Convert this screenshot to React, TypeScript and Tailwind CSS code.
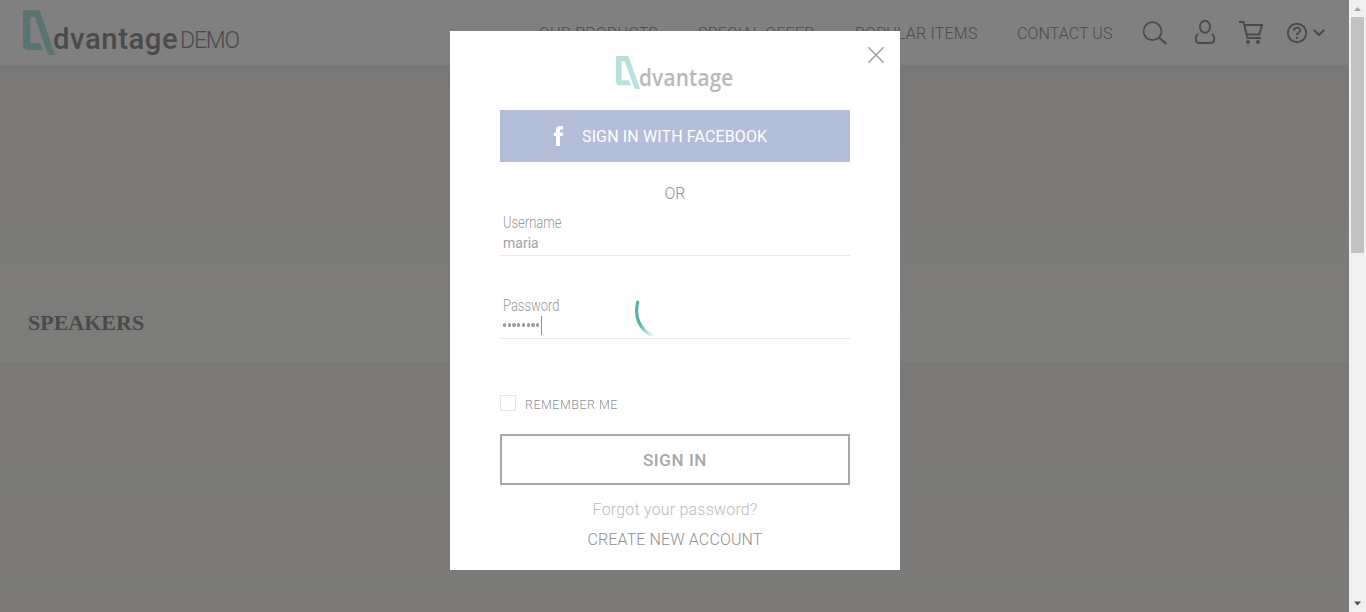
import React from "react";

function LogoMark({ className }: { className: string }) {
  return (
    <svg className={className} viewBox="0 0 32 45" preserveAspectRatio="none" fill="currentColor">
      <path fillRule="evenodd" d="M0 0H14.5C16 0 16.8 .8 17.3 2L32 45H26.500C25.500 45 25 44.500 24.600 43.500L11.600 7H7.400V33H17L20 40H5C2 40 0 38.500 0 35Z" />
    </svg>
  );
}

function Header() {
  return (
    <header className="flex h-[65px] shrink-0 items-start bg-[#808080] text-[#4a4a4a]">
      <div className="flex w-[539px] shrink-0 pl-[23px]">
        <LogoMark className="mt-[10px] h-[45px] w-[32px] shrink-0 text-[#587571]" />
        <span className="-ml-[2px] mt-[19px] w-[127px] whitespace-nowrap text-[29.3px] font-medium leading-[40px] tracking-[0.55px]">dvantage</span>
        <span className="mt-[21px] whitespace-nowrap text-[23px] font-light leading-[40px] tracking-[-1.15px]">DEMO</span>
      </div>
      <nav className="mt-[22px] flex shrink-0 whitespace-nowrap text-[16px] font-light leading-[24px] tracking-[0.22px]">
        <span className="w-[159px]">OUR PRODUCTS</span>
        <span className="w-[157px]">SPECIAL OFFER</span>
        <span className="w-[162px]">POPULAR ITEMS</span>
        <span className="w-[125px] tracking-[0.1px]">CONTACT US</span>
      </nav>
      <svg className="mt-[20px] h-[26px] w-[26px] shrink-0" viewBox="0 0 26 26" fill="none" stroke="currentColor" strokeWidth="1.700">
        <circle cx="10.500" cy="11.200" r="9" />
        <path d="M16.800 17.500L24.500 24" strokeWidth="2" />
      </svg>
      <svg className="ml-[26px] mt-[19px] h-[26px] w-[22px] shrink-0" viewBox="0 0 22 26" fill="none" stroke="currentColor" strokeWidth="1.900">
        <ellipse cx="11" cy="7.800" rx="5.100" ry="6" />
        <path d="M4.300 15C1.800 16.500 1.500 19 1.900 21Q2.300 24 5.500 24H16.500Q19.700 24 20.100 21C20.500 19 20.200 16.500 17.700 15" />
      </svg>
      <svg className="ml-[23px] mt-[20px] h-[26px] w-[26px] shrink-0" viewBox="0 0 26 26" fill="none" stroke="currentColor" strokeWidth="1.900">
        <path d="M0 2H4.500L8.500 18H22M5.400 5H23L20.300 14.500H7.600" />
        <circle cx="9" cy="22" r="2" fill="currentColor" stroke="none" />
        <circle cx="19" cy="22" r="2" fill="currentColor" stroke="none" />
      </svg>
      <svg className="ml-[21px] mt-[22px] h-[22px] w-[22px] shrink-0" viewBox="0 0 22 22" fill="none" stroke="currentColor" strokeWidth="1.900">
        <circle cx="11" cy="11" r="9.200" />
        <path d="M7.700 8.800C8 4.500 14.500 4.700 14.100 8.700C13.800 11 11 10.700 11 13.300M11 14.900V17" />
      </svg>
      <svg className="ml-[5px] mt-[28px] h-[10px] w-[12px] shrink-0" viewBox="0 0 12 10" fill="none" stroke="currentColor" strokeWidth="2">
        <path d="M.7 1.700L6 7L11.300 1.700" />
      </svg>
    </header>
  );
}

function Field({ label, children }: { label: string; children: React.ReactNode }) {
  return (
    <label className="block h-[44px] border-b border-[#e8e8e8] pl-[3px]">
      <span className="block origin-left scale-x-[0.81] text-[16px] font-light leading-[21px] text-[#999]">{label}</span>
      {children}
    </label>
  );
}

function SignInDialog() {
  return (
    <div className="absolute left-[450px] top-[31px] h-[539px] w-[450px] bg-white px-[50px] text-[#8f8f8f]">
      <button aria-label="Close" className="absolute left-[417px] top-[15px]">
        <svg className="h-[18px] w-[18px]" viewBox="0 0 18 18" fill="none" stroke="#a0a0a0" strokeWidth="1.500">
          <path d="M1.300 1.300L16.700 16.700M16.700 1.300L1.300 16.700" />
        </svg>
      </button>
      <div className="flex h-[79px] pl-[116px] pt-[25px]">
        <LogoMark className="h-[33px] w-[24px] shrink-0 text-[#b8e1dd]" />
        <span className="-ml-[1px] mt-[6px] origin-left scale-x-[0.9] text-[23px] font-semibold leading-[30px] tracking-[0.25px] text-[#b8b8b8] [font-family:'Open_Sans',sans-serif]">dvantage</span>
      </div>
      <button className="flex h-[52px] w-full items-center bg-[#b4bed8] pl-[53px] text-white">
        <svg className="h-[20px] w-[11px]" viewBox="0 0 11 20" fill="currentColor">
          <path d="M3 20V10H.8V6.500H3V4.300C3 1.500 4.400 0 7.200 0H10V3.500H8.200C7.300 3.500 7 3.900 7 4.700V6.500H10L9.600 10H7V20Z" />
        </svg>
        <span className="ml-[18px] mt-[2px] whitespace-nowrap text-[16px] leading-[24px] tracking-[0.13px]">SIGN IN WITH FACEBOOK</span>
      </button>
      <div className="mt-[20px] text-center text-[16px] font-light leading-[24px]">OR</div>
      <div className="mt-[6px]">
        <Field label="Username">
          <span className="block text-[14px] leading-[20px] text-[#a2a2a2]">maria</span>
        </Field>
      </div>
      <div className="mt-[39px]">
        <Field label="Password">
          <span className="flex h-[18px] items-center">
            {Array.from({ length: 8 }, (_, i) => (
              <span key={i} className="mr-[1.55px] h-[3.2px] w-[3.2px] rounded-full bg-[#999]" />
            ))}
            <span className="h-[19px] w-px bg-[#8a8a8a]" />
          </span>
        </Field>
      </div>
      <svg className="absolute left-[182px] top-[266px] h-[42px] w-[24px]" viewBox="0 0 24 42" fill="none">
        <defs>
          <linearGradient id="spinner-tail" x1="0" y1="4" x2="18" y2="41" gradientUnits="userSpaceOnUse">
            <stop offset=".6" stopColor="#52b3ab" />
            <stop offset="1" stopColor="#52b3ab" stopOpacity=".05" />
          </linearGradient>
        </defs>
        <path d="M5.700 5.200C2 19 7.500 33 20.500 38.800" stroke="url(#spinner-tail)" strokeWidth="3.200" strokeLinecap="round" />
      </svg>
      <div className="mt-[56px] flex h-[16px] items-center">
        <span className="h-[16px] w-[16px] border border-[#e6e6e6]" />
        <span className="ml-[9px] mt-[3px] text-[12.5px] font-light leading-[16px] tracking-[0.5px]">REMEMBER ME</span>
      </div>
      <button className="mt-[23px] block h-[51px] w-full border-2 border-[#a8a8a8] pt-[2px] text-[17px] font-medium tracking-[0.6px] text-[#a8a8a8]">SIGN IN</button>
      <div className="mt-[13px] text-center text-[16px] font-light leading-[24px] tracking-[0.2px] text-[#bcbcbc]">Forgot your password?</div>
      <div className="mt-[6px] text-center text-[16px] font-light leading-[24px] tracking-[0.13px]">CREATE NEW ACCOUNT</div>
    </div>
  );
}

function Scrollbar() {
  return (
    <div className="flex w-[17px] shrink-0 flex-col items-center bg-[#f0f0f0]">
      <svg className="h-[17px] w-[17px]" viewBox="0 0 17 17" fill="#a3a3a3"><path d="M5 11L8.500 7L12 11Z" /></svg>
      <div className="h-[236px] w-[13px] bg-[#c1c1c1]" />
      <svg className="mt-auto h-[17px] w-[17px]" viewBox="0 0 17 17" fill="#505050"><path d="M5 6.500L8.500 10.500L12 6.500Z" /></svg>
    </div>
  );
}

export default function App() {
  return (
    <div className="relative flex h-[612px] w-[1366px] overflow-hidden [font-family:Roboto,sans-serif]">
      <div className="flex min-w-0 flex-1 flex-col">
        <Header />
        <main className="flex flex-1 flex-col bg-[#7b7a78]">
          <section className="h-[297px] bg-linear-to-b from-[#7a7876] to-[#7d7d7b] pl-[28px] pt-[244px]">
            <h1 className="text-[22px] font-bold leading-[28px] text-[#4a4a4a] [font-family:'Liberation_Serif',serif]">SPEAKERS</h1>
          </section>
          <section className="flex-1 bg-linear-to-b from-[#7a7977] to-[#7c7b79]" />
        </main>
      </div>
      <Scrollbar />
      <SignInDialog />
    </div>
  );
}
